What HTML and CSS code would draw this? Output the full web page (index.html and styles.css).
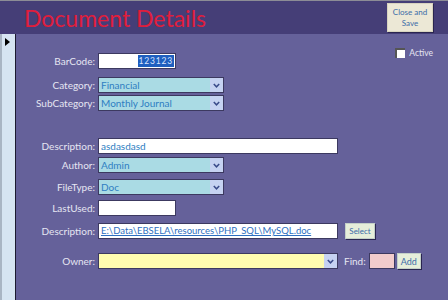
FILE: index.html
```html
<!DOCTYPE html>
<html>
<head>
<meta charset="utf-8">
<link rel="stylesheet" href="styles.css">
</head>
<body>
<div class="app">
  <header class="header">
    <h1 class="title">Document Details</h1>
    <button class="close-btn">Close and<br>Save</button>
  </header>
  <div class="main">
    <div class="selector"><span class="arrow"></span></div>
    <div class="form">
      <div class="row r-barcode">
        <label class="lbl">BarCode:</label>
        <div class="box txt short"><span class="sel">123123</span></div>
        <div class="active"><span class="chk"></span><span>Active</span></div>
      </div>
      <div class="row r-cat">
        <label class="lbl">Category:</label>
        <div class="box combo"><span class="val">Financial</span><span class="drop"><svg width="7" height="5" viewBox="0 0 7 5"><polyline points="0.8,1 3.5,3.8 6.2,1" fill="none" stroke="#3a4a8a" stroke-width="1.5"/></svg></span></div>
      </div>
      <div class="row r-sub">
        <label class="lbl">SubCategory:</label>
        <div class="box combo"><span class="val">Monthly Journal</span><span class="drop"><svg width="7" height="5" viewBox="0 0 7 5"><polyline points="0.8,1 3.5,3.8 6.2,1" fill="none" stroke="#3a4a8a" stroke-width="1.5"/></svg></span></div>
      </div>
      <div class="row r-desc">
        <label class="lbl">Description:</label>
        <div class="box txt wide"><span class="val">asdasdasd</span></div>
      </div>
      <div class="row r-author">
        <label class="lbl">Author:</label>
        <div class="box combo"><span class="val">Admin</span><span class="drop"><svg width="7" height="5" viewBox="0 0 7 5"><polyline points="0.8,1 3.5,3.8 6.2,1" fill="none" stroke="#3a4a8a" stroke-width="1.5"/></svg></span></div>
      </div>
      <div class="row r-type">
        <label class="lbl">FileType:</label>
        <div class="box combo"><span class="val">Doc</span><span class="drop"><svg width="7" height="5" viewBox="0 0 7 5"><polyline points="0.8,1 3.5,3.8 6.2,1" fill="none" stroke="#3a4a8a" stroke-width="1.5"/></svg></span></div>
      </div>
      <div class="row r-last">
        <label class="lbl">LastUsed:</label>
        <div class="box txt short"></div>
      </div>
      <div class="row r-path">
        <label class="lbl">Description:</label>
        <div class="box txt wide"><a class="link">E:\Data\EBSELA\resources\PHP_SQL\MySQL.doc</a></div>
        <button class="btn sel-btn">Select</button>
      </div>
      <div class="row r-owner">
        <label class="lbl">Owner:</label>
        <div class="box combo owner"><span class="val"></span><span class="drop"><svg width="7" height="5" viewBox="0 0 7 5"><polyline points="0.8,1 3.5,3.8 6.2,1" fill="none" stroke="#3a4a8a" stroke-width="1.5"/></svg></span></div>
        <label class="find-lbl">Find:</label>
        <div class="box find"></div>
        <button class="btn add-btn">Add</button>
      </div>
    </div>
  </div>
</div>
</body>
</html>
```

FILE: styles.css
```css
* { box-sizing: border-box; }
html, body { margin: 0; padding: 0; }
body {
  width: 448px;
  height: 300px;
  overflow: hidden;
  font-family: Lato, "Open Sans", sans-serif;
  background: #65619a;
}
.app { width: 448px; height: 300px; display: flex; flex-direction: column; }
.header {
  height: 34px;
  background: #453e77;
  border-top: 1px solid #8c8c96;
  display: flex;
  align-items: flex-start;
  justify-content: space-between;
  padding-left: 24px;
  padding-right: 15px;
}
.title {
  margin: 4px 0 0 0;
  font-weight: normal;
  font-size: 23px;
  line-height: 26px;
  color: #e01d3c;
  letter-spacing: 0;
}
.close-btn {
  margin-top: 2px;
  width: 46px;
  height: 29px;
  padding: 0;
  border: 1px solid #d8d4c0;
  background: #ece8d6;
  color: #3b6ca8;
  font-family: Lato, "Open Sans", sans-serif;
  font-size: 8px;
  line-height: 11px;
  box-shadow: 1px 1px 0 #2a2550;
}
.main { flex: 1; display: flex; }
.selector {
  width: 16px;
  background: #d6e4f2;
  border-left: 2px solid #a9b5c4;
  border-right: 1px solid #1c1a30;
  padding: 4px 0 0 3px;
}
.arrow {
  display: block;
  width: 0; height: 0;
  border-top: 4px solid transparent;
  border-bottom: 4px solid transparent;
  border-left: 5px solid #000;
}
.form { flex: 1; display: flex; flex-direction: column; padding-top: 18px; }
.row { display: flex; align-items: center; gap: 3px; height: 16px; }
.lbl {
  width: 79px;
  text-align: right;
  color: #e6e6f2;
  font-size: 10px;
}
.box {
  height: 16px;
  border: 1px solid #3c3960;
  font-size: 10px;
  line-height: 14px;
  display: flex;
  align-items: center;
}
.txt { background: #fff; }
.short { width: 78px; justify-content: flex-end; }
.wide { width: 240px; }
.combo { width: 126px; background: #aadbe4; justify-content: space-between; }
.val { color: #2e7ec2; padding-left: 2px; }
.sel { background: #1f5fbf; color: #d8e4ff; padding: 0 1px; margin-right: 1px; font-size: 8.5px; line-height: 12px; letter-spacing: 0.8px; }
.drop {
  width: 13px; height: 14px;
  background: #c6d2f2;
  display: flex; align-items: center; justify-content: center;
}
.active {
  margin-left: auto;
  margin-right: 15px;
  align-self: flex-start;
  margin-top: -4px;
  display: flex; align-items: center; gap: 4px;
  color: #e6e6f2; font-size: 8.5px;
}
.chk { width: 10px; height: 10px; background: #fff; border-left: 2px solid #555; border-top: 2px solid #555; }
.r-barcode { height: 17px; }
.r-cat { margin-top: 8px; }
.r-sub { margin-top: 2px; }
.r-desc { margin-top: 27px; }
.r-author { margin-top: 3px; }
.r-type { margin-top: 6px; }
.r-last { margin-top: 5px; }
.r-path { margin-top: 7px; }
.r-owner { margin-top: 14px; }
.link { color: #2e6fc0; text-decoration: underline; padding-left: 2px; font-size: 9.5px; white-space: nowrap; }
.btn {
  height: 16px;
  padding: 0 3px;
  border: 1px solid #c4d0c8;
  background: #e6eeda;
  color: #3a6aa8;
  font-family: Lato, "Open Sans", sans-serif;
  font-size: 8px;
  box-shadow: 1px 1px 0 #2a2550;
}
.sel-btn { margin-left: 4px; width: 30px; }
.owner { width: 240px; background: #fffcb0; }
.find-lbl { color: #e6e6f2; font-size: 10px; margin-left: 3px; }
.find { width: 26px; background: #f2cccc; margin-left: 0; }
.add-btn { width: 24px; font-size: 9px; margin-left: -1px; }
```
